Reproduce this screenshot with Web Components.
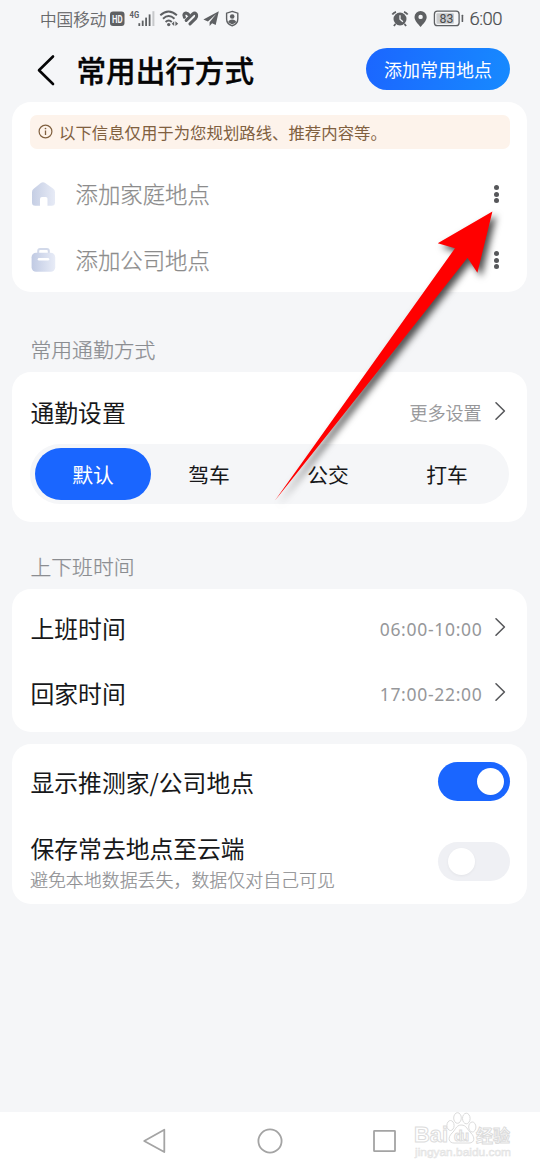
<!DOCTYPE html>
<html lang="zh-CN">
<head>
<meta charset="utf-8">
<title>常用出行方式</title>
<style>
html,body{margin:0;padding:0}
body{width:540px;height:1170px;overflow:hidden;background:#f5f6f8;font-family:"Noto Sans CJK SC","Noto Sans",sans-serif;color:#17181a}
</style>
</head>
<body>
<travel-page></travel-page>
<script>
function define(name, html) {
  customElements.define(name, class extends HTMLElement {
    constructor() {
      super();
      const t = document.createElement('template');
      t.innerHTML = html;
      this.attachShadow({ mode: 'open' }).appendChild(t.content.cloneNode(true));
    }
  });
}

define('status-bar', `
<style>
:host{display:flex;height:38px;box-sizing:border-box;padding:0 38px 0 40px;align-items:center;justify-content:space-between;color:#5e6063;font-size:16.6px;line-height:38px}
svg{display:block}
.g{display:flex;align-items:center}
.name{font-weight:300;-webkit-text-stroke:.25px #5e6063;padding-bottom:1px}
.time{font-family:Roboto,sans-serif;font-size:18.5px;font-weight:300;letter-spacing:-.55px;margin-left:5px;color:#4c4e50;-webkit-text-stroke:.2px #4c4e50}
</style>
<div class="g"><span class="name">中国移动</span>
<svg width="134" height="38" viewBox="106 0 134 38" fill="#5e6063">
<rect x="110" y="11.5" width="14.5" height="14.5" rx="3"/>
<text x="112" y="22.6" font-family="Roboto" font-size="10.5" font-weight="700" fill="#f5f6f8" textLength="10.6" lengthAdjust="spacingAndGlyphs">HD</text>
<text x="129.6" y="18" font-family="Roboto" font-size="9.8" font-weight="700" textLength="9.6" lengthAdjust="spacingAndGlyphs">4G</text>
<rect x="138.4" y="23.2" width="1.8" height="2.8"/><rect x="141.8" y="20.6" width="1.8" height="5.4"/><rect x="145.2" y="17.6" width="1.8" height="8.4"/><rect x="148.7" y="14.4" width="1.8" height="11.6"/><rect x="152.4" y="11.2" width="2" height="14.8" opacity=".3"/>
<g fill="none" stroke="#5e6063" stroke-width="1.9"><path d="M160.3 15.2Q168.5 7.6 176.9 15.2M163 18.7Q168.6 13.2 174.5 18.7M165.6 22Q168.7 19 171.8 22"/></g>
<circle cx="168.7" cy="24.6" r="1.7"/><path d="M174.2 21.3V26L171.7 23.7ZM175.4 21.3V26L178.2 23.7Z"/>
<g fill="none" stroke="#5e6063" stroke-width="3.1" stroke-linecap="round"><path d="M184.4 17.2C182.8 14.4 184.8 12.6 186.6 13.2Q188 13.6 188.6 14.6"/><path d="M186.2 20.4L192.6 14.2Q194.6 12.4 196 13.8"/><path d="M190 23.8L195.6 18.4Q197 16.8 196.6 15"/></g>
<path d="M218.8 11.3L203.4 19.5L207.9 21.4L216.2 14L209.6 22.2V26L212.1 23.3L215.7 25Z"/>
<path d="M232.2 11.4L237.8 13.2V19C237.8 22.3 235.5 24.7 232.2 25.8C228.9 24.7 226.6 22.3 226.6 19V13.2Z" fill="none" stroke="#5e6063" stroke-width="1.4"/><circle cx="232.2" cy="16.5" r="2.3"/><path d="M228.2 22.3C228.8 18.7 235.6 18.7 236.2 22.3L232.2 24.6Z"/>
</svg></div>
<div class="g"><svg width="74" height="38" viewBox="390 0 74 38" fill="#5e6063">
<circle cx="399" cy="19" r="6.5"/><path d="M394.5 24L392.9 26M403.5 24L405.1 26M391.3 14.5Q392.7 12.5 395 11.8M406.7 14.5Q405.3 12.5 403 11.8" fill="none" stroke="#5e6063" stroke-width="1.8"/><path d="M399 15.2V19.2L401.9 21.8" fill="none" stroke="#f5f6f8" stroke-width="1.3"/>
<path d="M419.6 11A6.1 6.1 0 0 0 413.5 17C413.5 21 417.5 24.2 419.6 27C421.7 24.2 425.7 21 425.7 17A6.1 6.1 0 0 0 419.6 11Z"/><circle cx="419.6" cy="16.9" r="2.2" fill="#f5f6f8"/>
<rect x="433.4" y="11.2" width="24.7" height="14.5" rx="3" fill="none" stroke="#5e6063" stroke-width="1.3"/><rect x="435.5" y="13.2" width="17.4" height="10.5" rx="1" fill="#c9cacc"/><rect x="460.6" y="14.7" width="1.6" height="7.4" rx=".5"/>
<text x="445.5" y="22.9" font-family="Roboto" font-size="12.3" text-anchor="middle" fill="#47494b">83</text>
</svg><span class="time">6:00</span></div>`);

define('page-header', `
<style>
:host{display:flex;height:64px;box-sizing:border-box;padding:0 30px 0 37px;align-items:center}
svg{display:block;margin-right:20.5px}
h1{margin:0;flex:1;font-size:29.6px;line-height:44px;font-weight:500;color:#050506;-webkit-text-stroke:.35px #050506}
button{width:144px;height:42px;margin:0 0 2px;border:0;padding:0;border-radius:21px;background:linear-gradient(100deg,#1b66ff,#178aff);color:#fff;font:400 18px/42px "Noto Sans CJK SC",sans-serif}
</style>
<svg width="19" height="34" viewBox="37 52 19 34"><path d="M53 55.5L39 69.3L53 83" fill="none" stroke="#050506" stroke-width="2.6" stroke-linecap="round" stroke-linejoin="round"/></svg>
<h1><slot></slot></h1><button type="button">添加常用地点</button>`);

define('ui-card', `
<style>:host{display:block;margin:0 13px 0 12px;padding:0 17px 0 18px;border-radius:19px;background:#fff;box-sizing:border-box}</style><slot></slot>`);

define('section-label', `
<style>:host{display:block;padding-left:30.5px;font-size:20.8px;line-height:30px;font-weight:300;color:#8b8d91;-webkit-text-stroke:.25px #8b8d91}</style><slot></slot>`);

define('notice-bar', `
<style>:host{display:flex;align-items:center;height:34px;border-radius:7px;background:#fdf3eb;color:#80603f;font-size:16.4px;line-height:34px;padding-left:8px}svg{margin-right:6px}</style>
<svg width="15" height="15" viewBox="0 0 15 15"><circle cx="7.5" cy="7.5" r="6.4" fill="none" stroke="#80603f" stroke-width="1.2"/><path d="M7.5 6.5V11" stroke="#80603f" stroke-width="1.3"/><circle cx="7.5" cy="4.5" r=".85" fill="#80603f"/></svg><slot></slot>`);

define('place-row', `
<style>:host{display:flex;align-items:center;height:66px;font-size:22.4px;line-height:32px;font-weight:300;color:#8c8c8c;-webkit-text-stroke:.25px #8c8c8c}
span{flex:1;margin-left:19.5px;padding-bottom:2px}svg{display:block}.dots{display:grid;gap:1.8px;margin-right:11px}i{width:5px;height:5px;border-radius:50%;background:#56575a}</style>
<slot name="icon"></slot><span><slot></slot></span><div class="dots"><i></i><i></i><i></i></div>`);

define('setting-row', `
<style>:host{display:flex;align-items:center;height:65px;font-size:23.8px;line-height:34px}
.t{flex:1;padding:0 0 2px .5px}.v{font-size:18px;font-weight:300;color:#8f9093;margin-right:12.5px;padding-bottom:2px;-webkit-text-stroke:.25px #8f9093}
:host([num]) .v{font-family:"Noto Sans",sans-serif;font-size:17.5px;font-weight:400;padding-bottom:0;-webkit-text-stroke:0;letter-spacing:.7px;margin-right:11.5px;color:#96979a}
svg{display:block;margin:0 3px 3px 0}</style>
<span class="t"><slot></slot></span><span class="v"><slot name="value"></slot></span>
<svg width="13" height="20" viewBox="0 0 13 20"><path d="M2 1.8L10.4 10L2 18.2" fill="none" stroke="#57585b" stroke-width="1.6" stroke-linecap="round" stroke-linejoin="round"/></svg>`);

define('mode-tabs', `
<style>:host{display:flex;box-sizing:border-box;width:479px;height:60px;border-radius:30px;background:#f5f6f8;padding:4px 1px 4px 5px}
b{flex:0 0 119px;text-align:center;font-size:20.8px;line-height:53px;font-weight:400}
b.on{flex-basis:116px;height:52px;margin-right:-1.5px;border-radius:26px;background:#1a66ff;color:#fff}</style>
<b class="on">默认</b><b>驾车</b><b>公交</b><b>打车</b>`);

define('toggle-switch', `
<style>:host{display:flex;align-items:center;box-sizing:border-box;width:72px;height:39px;border-radius:20px;background:#eff0f4;padding:0 9.5px}
i{width:27px;height:27px;border-radius:50%;background:#fff;box-shadow:0 1px 3px #0000000d}
:host([on]){background:#1a66ff;justify-content:flex-end;padding:0 6px}</style><i></i>`);

define('switch-row', `
<style>:host{display:flex;align-items:center;justify-content:space-between}
.t{padding-left:.5px;font-size:23.8px;line-height:34px}.d{font-size:17.95px;line-height:28px;font-weight:300;color:#8f9093;-webkit-text-stroke:.2px #8f9093}</style>
<div><div class="t"><slot></slot></div><div class="d"><slot name="desc"></slot></div></div><slot name="control"></slot>`);

define('nav-bar', `
<style>:host{display:grid;grid-template-columns:30px 30px 30px;justify-content:center;column-gap:85px;align-items:center;height:58px;background:#fff}svg{display:block;fill:none;stroke:#a4a4a4;stroke-width:1.8;stroke-linejoin:round}</style>
<svg width="30" height="30"><path d="M24.3 3.8V26L4.2 15Z"/></svg>
<svg width="30" height="30"><circle cx="15" cy="15" r="11.6"/></svg>
<svg width="30" height="30"><rect x="4" y="4.8" width="21" height="20.4" rx=".5"/></svg>`);

define('pointer-arrow', `
<style>:host{position:absolute;left:0;top:0;width:540px;height:1170px;pointer-events:none}svg{display:block;filter:drop-shadow(4px 4px 3.5px rgba(0,0,0,.7))}</style>
<svg width="540" height="1170"><path d="M492.4 211.5L437.7 243.3L455 248.3L274.6 501Q376 374 467.5 257.7L477.4 272.8Z" fill="#f00"/></svg>`);

define('water-mark', `
<style>:host{position:absolute;left:410px;top:1108px;width:110px;height:54px;pointer-events:none}svg{display:block}</style>
<svg width="110" height="54" viewBox="410 1108 110 54" fill="#fff" stroke="#dcdcdc" stroke-width="1" font-family="Liberation Sans, Noto Sans CJK SC, sans-serif">
<text x="414" y="1142" font-size="22" font-weight="700" textLength="34" lengthAdjust="spacingAndGlyphs">Bai</text>
<ellipse cx="450.5" cy="1125.5" rx="3.6" ry="5"/><ellipse cx="457.5" cy="1118" rx="3.8" ry="5.3"/><ellipse cx="466.3" cy="1118.5" rx="3.8" ry="5.3"/><ellipse cx="472.3" cy="1127" rx="3.6" ry="5"/>
<path d="M461 1125C456 1125 455 1131 452 1133C447 1138 449 1143 454 1143H469C475 1143 475 1137 471 1133C467 1130 467 1125 461 1125Z"/>
<text x="454" y="1141" font-size="14" font-weight="700" textLength="15">du</text>
<text x="476" y="1141.5" font-size="17" font-weight="700" font-family="Noto Sans CJK SC" textLength="34">经验</text>
<text x="415" y="1155.5" font-size="11" textLength="96" lengthAdjust="spacingAndGlyphs" stroke-width=".5" stroke="#e2e2e2" fill="#f2f2f2">jingyan.baidu.com</text></svg>`);

define('travel-page', `
<style>
:host{position:relative;display:flex;flex-direction:column;width:540px;height:1170px;background:#f5f6f8;overflow:hidden}
.places{height:190px;padding-top:12.5px}.places notice-bar{margin-bottom:12.5px}
.l1{margin:42px 0 8px}.l2{margin:29px 0 8px}
.commute{height:150px;padding-top:8px}.commute mode-tabs{margin-top:-1px}
.times{height:143px;padding-top:7px}
.cloud{height:160px;margin-top:12px;padding-top:18px}
.inferred{height:39px}
.save{height:62px;margin-top:30px}
.save toggle-switch{margin-bottom:1.5px}
nav-bar{margin-top:auto}
</style>
<status-bar></status-bar>
<page-header>常用出行方式</page-header>
<ui-card class="places"><notice-bar>以下信息仅用于为您规划路线、推荐内容等。</notice-bar>
<place-row><svg slot="icon" width="26" height="26" viewBox="0 0 26 26"><defs><linearGradient id="home"><stop stop-color="#c5cee4"/><stop offset="1" stop-color="#e7ebf6"/></linearGradient></defs><path d="M10.8 2.1Q13 .5 15.2 2.1L23 7.4Q25 8.8 25 11V21.5Q25 24.8 21.7 24.8H17.5V17.8Q17.5 16 15.8 16H12Q10 16 10 18V24.8H5.3Q2 24.8 2 21.5V11Q2 8.8 4 7.4Z" fill="url(#home)"/></svg>添加家庭地点</place-row>
<place-row><svg slot="icon" width="26" height="26" viewBox="0 0 26 26"><defs><linearGradient id="bag"><stop stop-color="#c0cae3"/><stop offset="1" stop-color="#e8ecf7"/></linearGradient></defs><path d="M8.2 7V4Q8.2 2 10.2 2H16.8Q18.8 2 18.8 4V7" fill="none" stroke="#d2d9ea" stroke-width="2"/><rect x="1.6" y="5.8" width="23.6" height="19" rx="4.5" fill="url(#bag)"/><path d="M9 12.2H18" stroke="#fff" stroke-width="2.5" stroke-linecap="round"/></svg>添加公司地点</place-row></ui-card>
<section-label class="l1">常用通勤方式</section-label>
<ui-card class="commute"><setting-row>通勤设置<span slot="value">更多设置</span></setting-row><mode-tabs></mode-tabs></ui-card>
<section-label class="l2">上下班时间</section-label>
<ui-card class="times"><setting-row num>上班时间<span slot="value">06:00-10:00</span></setting-row><setting-row num>回家时间<span slot="value">17:00-22:00</span></setting-row></ui-card>
<ui-card class="cloud"><switch-row class="inferred">显示推测家/公司地点<toggle-switch on slot="control"></toggle-switch></switch-row><switch-row class="save">保存常去地点至云端<span slot="desc">避免本地数据丢失，数据仅对自己可见</span><toggle-switch slot="control"></toggle-switch></switch-row></ui-card>
<nav-bar></nav-bar>
<water-mark></water-mark>
<pointer-arrow></pointer-arrow>`);
</script>
</body>
</html>
